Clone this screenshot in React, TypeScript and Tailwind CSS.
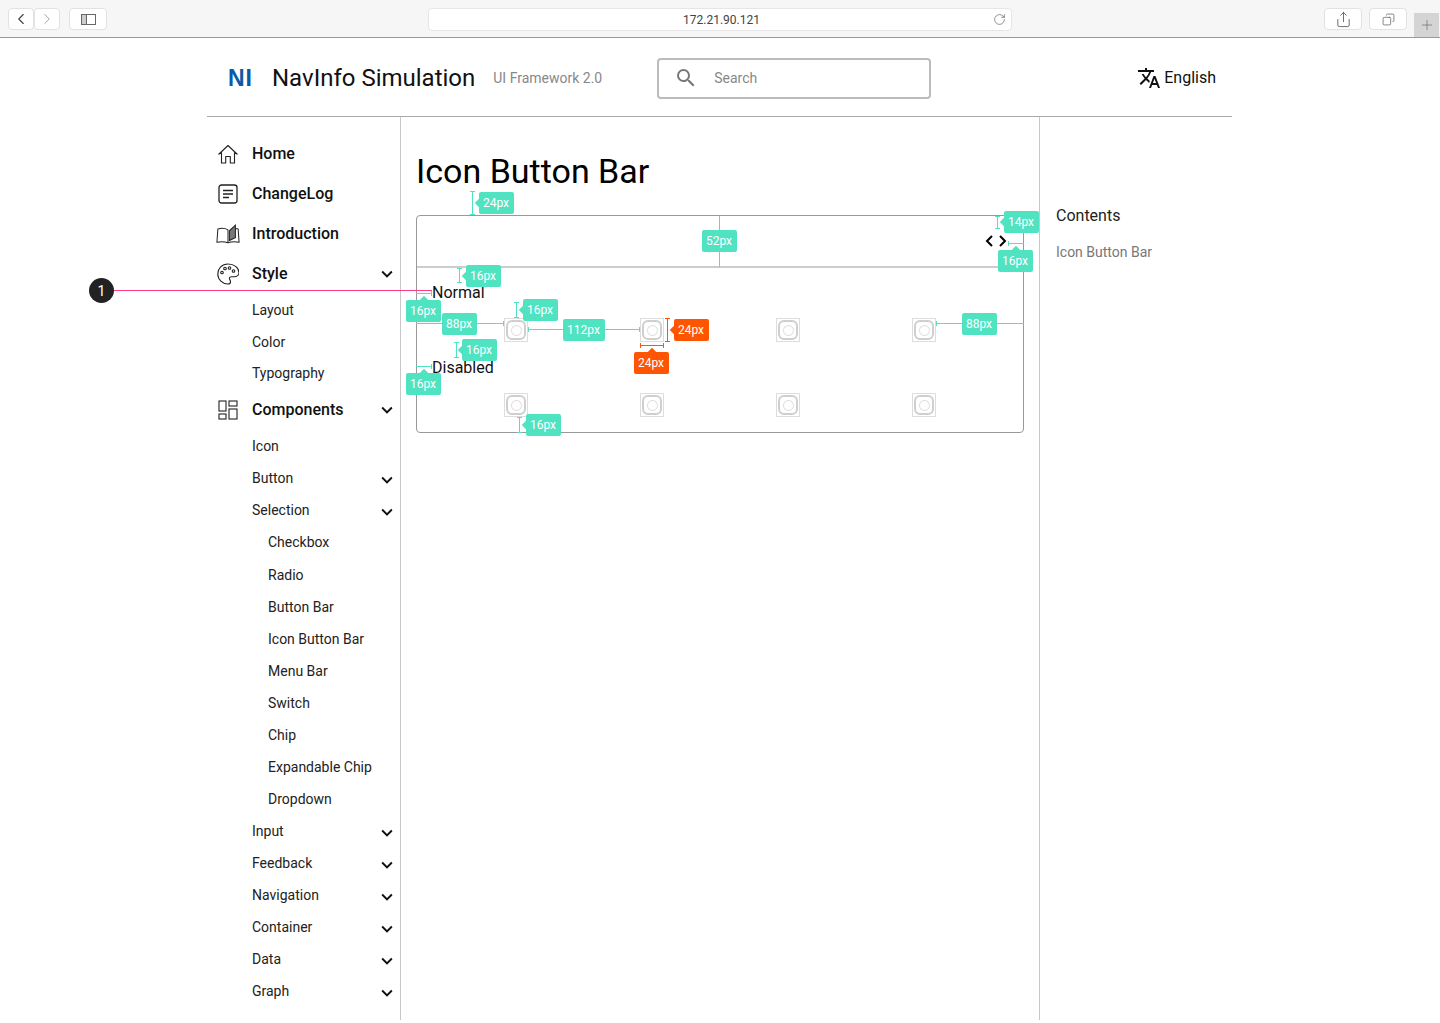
import React from 'react';
import { MdTranslate, MdSearch, MdKeyboardArrowDown } from 'react-icons/md';
import { ChevronLeft, ChevronRight, RotateCw, Share, Copy, Plus } from 'lucide-react';

const font = { fontFamily: 'Roboto, sans-serif' };

const HomeIcon = () => (
  <svg width="22" height="22" viewBox="0 0 22 22" fill="none" stroke="#222" strokeWidth="1.1">
    <path d="M1.5 11.5 11 2.5l9.5 9M4.5 9.5V20h4.2v-6.5h4.6V20h4.2V9.5" strokeLinejoin="round" />
  </svg>
);

const LogIcon = () => (
  <svg width="22" height="22" viewBox="0 0 22 22" fill="none" stroke="#222" strokeWidth="1.3">
    <rect x="2" y="2" width="18" height="18" rx="2.5" />
    <path d="M6 7.5h10M6 11h10M6 14.5h6" />
  </svg>
);

const BookIcon = () => (
  <svg width="24" height="22" viewBox="0 0 26 22" fill="none" stroke="#222" strokeWidth="1.1">
    <path d="M13 6.5C10.5 5 6 4.5 2 5.5L1 20c4-1 8.500-.8 12 .5 3.500-1.300 8-1.500 12-.5L24 5.500c-1-.3-2-.4-3-.5" strokeLinejoin="round" />
    <path d="M13 6.500V20.500" />
    <path d="M14.500 18 21 15V1.500l-6.500 6z" fill="#777" />
  </svg>
);

const PaletteIcon = () => (
  <svg width="22" height="22" viewBox="0 0 22 22" fill="none" stroke="#222" strokeWidth="1.1">
    <path d="M11 1C5 1 .8 5.500.8 11S5.500 21 11 21c1.700 0 2.500-1.100 2.500-2.300 0-1.500-1.100-2-1.100-3.100 0-1.200 1-1.900 2.200-1.900h2.600c2.600 0 4.800-1.600 4.800-4C21.800 4.500 17 1 11 1z" />
    <circle cx="5" cy="9.500" r="1.300" />
    <circle cx="8" cy="5.500" r="1.300" />
    <circle cx="12.500" cy="5" r="1.300" />
    <circle cx="16.500" cy="8" r="1.300" />
  </svg>
);

const GridIcon = () => (
  <svg width="20" height="20" viewBox="0 0 20 20" fill="none" stroke="#222" strokeWidth="1.100">
    <rect x="1" y="1" width="7" height="10" />
    <rect x="11" y="1" width="8" height="5" />
    <rect x="1" y="14" width="7" height="5" />
    <rect x="11" y="9" width="8" height="10" />
  </svg>
);

const Placeholder = () => (
  <div className="w-6 h-6 border border-[#dddddd] flex items-center justify-center">
    <div className="w-5 h-5 border-2 border-[#cfcfcf] rounded-[6px] flex items-center justify-center">
      <div className="w-[11px] h-[11px] border border-[#dcdcdc] rounded-full" />
    </div>
  </div>
);

const Chevron = () => <MdKeyboardArrowDown size={22} className="text-[#111]" />;

const MainItem = ({ icon, label, open }: { icon: React.ReactNode; label: string; open?: boolean }) => (
  <div className="h-10 flex items-center text-base font-medium text-[#111]">
    <div className="w-[45px] flex justify-center pr-[3px]">{icon}</div>
    <span className="flex-1">{label}</span>
    {open && <div className="mr-[-4px] flex">
      <Chevron />
    </div>}
  </div>
);

const SubItem = ({ label, open, deep, className }: { label: string; open?: boolean; deep?: boolean; className?: string }) => (
  <div className={`h-8 flex items-center text-sm text-[#222] ${deep ? 'pl-[61px]' : 'pl-[45px]'} ${className || ''}`}>
    <span className="flex-1">{label}</span>
    {open && <div className="mr-[-4px] mt-1 flex">
      <Chevron />
    </div>}
  </div>
);

const ToolbarButton = ({ children, className }: { children: React.ReactNode; className?: string }) => (
  <div className={`h-[22px] bg-white border border-[#e2e2e2] rounded-[4px] flex items-center justify-center ${className || ''}`}>
    {children}
  </div>
);

const BrowserBar = () => (
  <div className="h-[38px] bg-[#f6f6f6] border-b border-[#9a9a9a] flex items-start pt-2 pl-2 relative">
    <ToolbarButton className="w-[26px]"><ChevronLeft size={18} strokeWidth={1.5} className="text-[#444]" /></ToolbarButton>
    <ToolbarButton className="w-[26px]"><ChevronRight size={18} strokeWidth={1.2} className="text-[#999]" /></ToolbarButton>
    <ToolbarButton className="w-[38px] ml-[9px]">
      <div className="w-[15px] h-[11px] border border-[#666] flex">
        <div className="w-[5px] border-r border-[#666] bg-[#ccc]" />
      </div>
    </ToolbarButton>
    <div className="w-[584px] h-[23px] ml-[321px] bg-white border border-[#e6e6e6] rounded-[4px] flex items-center relative pl-[3px]">
      <span className="flex-1 text-center text-xs text-[#444]">172.21.90.121</span>
      <RotateCw size={13} strokeWidth={1.3} className="text-[#666] absolute right-[5px]" />
    </div>
    <ToolbarButton className="w-[38px] ml-[312px]"><Share size={17} strokeWidth={1.2} className="text-[#555]" /></ToolbarButton>
    <ToolbarButton className="w-[38px] ml-[7px]"><Copy size={13} strokeWidth={1.3} className="text-[#555] -scale-x-100" /></ToolbarButton>
    <div className="w-[25px] h-[24px] ml-[7px] mt-[5px] bg-[#d4d4d4] flex items-center justify-center">
      <Plus size={16} strokeWidth={1} className="text-[#666]" />
    </div>
  </div>
);

const Header = () => (
  <div className="h-[79px] border-b border-[#a8a8a8] flex items-center pl-[21px] pr-4 pt-[2px]">
    <span className="w-[44px] text-[23px] font-bold text-[#0b5aa5] tracking-[1px] leading-none" style={{ fontFamily: '"Liberation Sans", sans-serif' }}>NI</span>
    <span className="text-2xl text-[#111]">NavInfo Simulation</span>
    <span className="ml-[18px] text-sm text-[#888]">UI Framework 2.0</span>
    <div className="ml-[55px] w-[274px] h-[41px] border-2 border-[#bbbbbb] rounded-[4px] flex items-center pl-[15px]">
      <MdSearch size={24} className="text-[#777]" />
      <span className="ml-4 text-sm text-[#888]">Search</span>
    </div>
    <div className="flex-1" />
    <div className="flex items-center gap-[3px] text-base text-[#111]">
      <MdTranslate size={24} className="text-[#111]" />
      English
    </div>
  </div>
);

const Sidebar = () => (
  <div className="w-[194px] h-[903px] shrink-0 border-r border-[#c8c8c8] pt-[17px] pr-[6px] overflow-hidden">
    <MainItem icon={<HomeIcon />} label="Home" />
    <MainItem icon={<LogIcon />} label="ChangeLog" />
    <MainItem icon={<BookIcon />} label="Introduction" />
    <MainItem icon={<PaletteIcon />} label="Style" open />
    <SubItem label="Layout" />
    <SubItem label="Color" />
    <SubItem label="Typography" className="mt-[-1px] mb-px" />
    <MainItem icon={<GridIcon />} label="Components" open />
    <SubItem label="Icon" />
    <SubItem label="Button" open />
    <SubItem label="Selection" open />
    <SubItem label="Checkbox" deep />
    <SubItem label="Radio" deep className="mt-px" />
    <SubItem label="Button Bar" deep />
    <SubItem label="Icon Button Bar" deep />
    <SubItem label="Menu Bar" deep />
    <SubItem label="Switch" deep />
    <SubItem label="Chip" deep />
    <SubItem label="Expandable Chip" deep />
    <SubItem label="Dropdown" deep />
    <SubItem label="Input" open />
    <SubItem label="Feedback" open />
    <SubItem label="Navigation" open />
    <SubItem label="Container" open />
    <SubItem label="Data" open />
    <SubItem label="Graph" open />
  </div>
);

const IconRow = () => (
  <div className="flex pl-[72px] gap-[112px]">
    <Placeholder />
    <Placeholder />
    <Placeholder />
    <Placeholder />
  </div>
);

const Card = () => (
  <div className="w-[608px] border border-[#999999] rounded-[4px]">
    <div className="h-[52px] border-b-2 border-[#cccccc] flex items-center justify-end pr-4">
      <svg width="22" height="14" viewBox="0 0 22 14" fill="none" stroke="#000" strokeWidth="2">
        <path d="M7 2 2 7l5 5M15 2l5 5-5 5" />
      </svg>
    </div>
    <div className="p-[15px] text-base leading-[19px] text-[#111]">
      <div>Normal</div>
      <div className="mt-4"><IconRow /></div>
      <div className="mt-4">Disabled</div>
      <div className="mt-4"><IconRow /></div>
    </div>
  </div>
);

type Mark = { label: string; box: string; tip: string; orange?: boolean };

// redline tags drawn over the page
const marks: Mark[] = [
  { label: '24px', box: 'left-[479px] top-[192px] w-[35px]', tip: 'left' },
  { label: '52px', box: 'left-[702px] top-[230px] w-[35px]', tip: '' },
  { label: '14px', box: 'left-[1004px] top-[211px] w-[35px]', tip: 'left' },
  { label: '16px', box: 'left-[998px] top-[250px] w-[35px]', tip: 'top' },
  { label: '16px', box: 'left-[466px] top-[265px] w-[35px]', tip: 'left' },
  { label: '16px', box: 'left-[406px] top-[300px] w-[35px]', tip: 'top' },
  { label: '88px', box: 'left-[442px] top-[313px] w-[35px]', tip: '' },
  { label: '16px', box: 'left-[523px] top-[299px] w-[35px]', tip: 'left' },
  { label: '112px', box: 'left-[563px] top-[319px] w-[42px]', tip: '' },
  { label: '24px', box: 'left-[674px] top-[319px] w-[35px]', tip: 'left', orange: true },
  { label: '24px', box: 'left-[634px] top-[352px] w-[35px]', tip: 'top', orange: true },
  { label: '88px', box: 'left-[962px] top-[313px] w-[35px]', tip: '' },
  { label: '16px', box: 'left-[462px] top-[339px] w-[35px]', tip: 'left' },
  { label: '16px', box: 'left-[406px] top-[373px] w-[35px]', tip: 'top' },
  { label: '16px', box: 'left-[526px] top-[414px] w-[35px]', tip: 'left' },
];

type Line = { box: string; vertical?: boolean; start?: boolean; end?: boolean; orange?: boolean };

const lines: Line[] = [
  { box: 'left-[472px] top-[191px] w-px h-6', vertical: true, start: true, end: true },
  { box: 'left-[719px] top-[216px] w-px h-[51px]', vertical: true },
  { box: 'left-[997px] top-[216px] w-px h-[13px]', vertical: true, start: true, end: true },
  { box: 'left-[1008px] top-[243px] w-4 h-px', start: true },
  { box: 'left-[459px] top-[268px] w-px h-[15px]', vertical: true, start: true, end: true },
  { box: 'left-[416px] top-[293px] w-4 h-px', end: true },
  { box: 'left-[416px] top-[323px] w-[88px] h-px', end: true },
  { box: 'left-[516px] top-[302px] w-px h-4', vertical: true, start: true, end: true },
  { box: 'left-[528px] top-[329px] w-[112px] h-px', start: true, end: true },
  { box: 'left-[667px] top-[318px] w-px h-6', vertical: true, start: true, end: true, orange: true },
  { box: 'left-[640px] top-[345px] w-6 h-px', start: true, end: true, orange: true },
  { box: 'left-[936px] top-[323px] w-[88px] h-px', start: true },
  { box: 'left-[456px] top-[342px] w-px h-4', vertical: true, start: true, end: true },
  { box: 'left-[416px] top-[366px] w-4 h-px', end: true },
  { box: 'left-[519px] top-[417px] w-px h-4', vertical: true, start: true, end: true },
];

const Rule = ({ box, vertical, start, end, orange }: Line) => {
  const color = orange ? 'bg-[#ff5500]' : 'bg-[#50e3c2]';
  const cap = vertical ? 'left-[-2px] w-[5px] h-px' : 'top-[-2px] w-px h-[5px]';
  return (
    <div className={`absolute ${box} ${color}`}>
      {start && <div className={`absolute ${cap} ${color} ${vertical ? 'top-0' : 'left-0'}`} />}
      {end && <div className={`absolute ${cap} ${color} ${vertical ? 'bottom-0' : 'right-0'}`} />}
    </div>
  );
};

const Tag = ({ label, box, tip, orange }: Mark) => (
  <div className={`absolute h-[22px] rounded-[2px] flex items-center justify-center pr-px text-xs text-white ${box} ${orange ? 'bg-[#ff5500]' : 'bg-[#50e3c2]'}`}>
    {label}
    {tip === 'left' && <div className={`absolute left-[-3px] top-[8px] w-[6px] h-[6px] rotate-45 ${orange ? 'bg-[#ff5500]' : 'bg-[#50e3c2]'}`} />}
    {tip === 'top' && <div className={`absolute top-[-3px] left-[15px] w-[6px] h-[6px] rotate-45 ${orange ? 'bg-[#ff5500]' : 'bg-[#50e3c2]'}`} />}
  </div>
);

const Redlines = () => (
  <>
    {lines.map((l) => (
      <Rule key={l.box} {...l} />
    ))}
    {marks.map((m) => (
      <Tag key={m.box} {...m} />
    ))}
    <div className="absolute left-[114px] top-[290px] w-[318px] h-px bg-[#ff3c82]" />
    <div className="absolute left-[89px] top-[278px] w-[25px] h-[25px] rounded-full bg-[#222222] text-white text-sm flex items-center justify-center">1</div>
  </>
);

export default function App() {
  return (
    <div className="relative min-h-[1023px] bg-white overflow-hidden" style={font}>
      <BrowserBar />
      <div className="w-[1025px] ml-[207px]">
        <Header />
        <div className="flex">
          <Sidebar />
          <div className="w-[639px] h-[903px] shrink-0 border-r border-[#c8c8c8] pl-[15px] pt-8">
            <h1 className="text-[34px] leading-[44px] font-normal text-black mb-[22px]">Icon Button Bar</h1>
            <Card />
          </div>
          <div className="pl-4 pt-[89px]">
            <div className="text-base text-[#222] leading-[20px]">Contents</div>
            <div className="mt-4 text-sm text-[#777] leading-[20px]">Icon Button Bar</div>
          </div>
        </div>
      </div>
      <Redlines />
    </div>
  );
}
